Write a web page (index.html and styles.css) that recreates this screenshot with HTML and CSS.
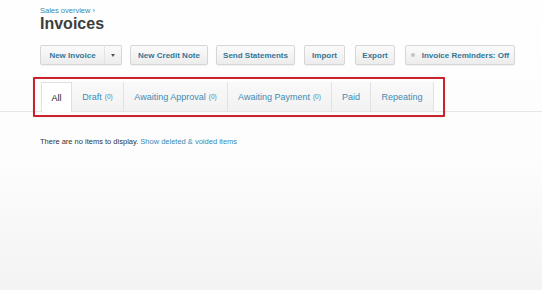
FILE: index.html
```html
<!DOCTYPE html>
<html>
<head>
<meta charset="utf-8">
<link rel="stylesheet" href="styles.css">
</head>
<body>
<div class="page">
  <div class="head">
    <a class="crumb" href="#">Sales overview ›</a>
    <h1 class="title">Invoices</h1>
  </div>
  <div class="toolbar">
    <div class="split">
      <span class="btn btn-main">New Invoice</span>
      <span class="btn btn-caret"><span class="caret"></span></span>
    </div>
    <span class="btn w-credit">New Credit Note</span>
    <span class="btn w-send">Send Statements</span>
    <span class="btn w-import">Import</span>
    <span class="btn w-export">Export</span>
    <span class="btn w-rem"><span class="dot"></span>Invoice Reminders: Off</span>
  </div>
  <div class="tabbar">
    <div class="tabs">
      <span class="tab active w-all">All</span>
      <span class="tab w-draft">Draft <small>(0)</small></span>
      <span class="tab w-aa">Awaiting Approval <small>(0)</small></span>
      <span class="tab w-ap">Awaiting Payment <small>(0)</small></span>
      <span class="tab w-paid">Paid</span>
      <span class="tab w-rep">Repeating</span>
    </div>
    <div class="highlight"></div>
  </div>
  <p class="empty">There are no items to display. <a href="#">Show deleted &amp; voided items</a></p>
</div>
</body>
</html>
```

FILE: styles.css
```css
html, body {
  margin: 0;
  padding: 0;
}
body {
  width: 542px;
  height: 290px;
  overflow: hidden;
  font-family: "Liberation Sans", Arial, sans-serif;
  background: linear-gradient(to bottom, #fefefe 0%, #fdfdfd 55%, #f3f3f3 100%);
  color: #333;
}
.page {
  display: flex;
  flex-direction: column;
}
.head {
  padding: 6px 0 0 40px;
  display: flex;
  flex-direction: column;
}
.crumb {
  font-size: 7.5px;
  line-height: 9px;
  color: #3f86ad;
  text-decoration: none;
}
.title {
  margin: 0;
  font-size: 16px;
  line-height: 18px;
  font-weight: bold;
  color: #3d3d3d;
}
.toolbar {
  display: flex;
  align-items: center;
  padding: 12px 0 0 40px;
  height: 20px;
}
.btn {
  box-sizing: border-box;
  height: 20px;
  display: flex;
  align-items: center;
  justify-content: center;
  border: 1px solid #d6d6d6;
  border-radius: 2px;
  background: linear-gradient(to bottom, #fbfbfb, #ececec);
  box-shadow: 0 1px 1px rgba(0,0,0,0.06);
  font-size: 8px;
  font-weight: bold;
  color: #337696;
  white-space: nowrap;
}
.split {
  display: flex;
  margin-right: 8px;
}
.btn-main {
  width: 65px;
  border-radius: 2px 0 0 2px;
}
.btn-caret {
  width: 18px;
  border-left: 1px solid #e4e4e4;
  margin-left: -1px;
  border-radius: 0 2px 2px 0;
}
.caret {
  width: 0;
  height: 0;
  border-left: 2.5px solid transparent;
  border-right: 2.5px solid transparent;
  border-top: 3px solid #555;
}
.w-credit { width: 78px; margin-right: 8px; }
.w-send { width: 79px; margin-right: 9px; }
.w-import { width: 41px; margin-right: 10px; }
.w-export { width: 40px; margin-right: 10px; }
.w-rem { width: 110px; }
.dot {
  width: 4px;
  height: 4px;
  border-radius: 50%;
  background: #c4c4c4;
  margin-right: 7px;
}
.tabbar {
  position: relative;
  margin-top: 17px;
  border-bottom: 1px solid #e6e6e6;
  padding-left: 41px;
}
.tabs {
  display: flex;
  height: 29px;
}
.tab {
  box-sizing: border-box;
  display: flex;
  align-items: center;
  justify-content: center;
  height: 29px;
  font-size: 9px;
  color: #3d8bb4;
  background: linear-gradient(to bottom, #f9f9f9, #f2f2f2);
  border-right: 1px solid #e2e2e2;
  white-space: nowrap;
}
.tab small {
  font-size: 6.5px;
  margin-left: 3px;
  color: #4d8fae;
}
.tab.active {
  background: #ffffff;
  color: #222;
  border: 1px solid #e0e0e0;
  border-bottom: none;
  height: 30px;
  margin-bottom: -1px;
}
.w-all { width: 31px; }
.w-draft { width: 52px; }
.w-aa { width: 104px; }
.w-ap { width: 104px; }
.w-paid { width: 39px; }
.w-rep { width: 63px; }
.highlight {
  position: absolute;
  left: 33px;
  top: -5px;
  width: 412px;
  height: 40px;
  box-sizing: border-box;
  border: 2px solid #c9242c;
  border-radius: 1px;
  box-shadow: 0 0 1px rgba(160,0,0,0.4);
  pointer-events: none;
}
.empty {
  margin: 25px 0 0 40px;
  font-size: 7.5px;
  color: #333;
}
.empty a {
  color: #3a8ab3;
  text-decoration: none;
}
```
